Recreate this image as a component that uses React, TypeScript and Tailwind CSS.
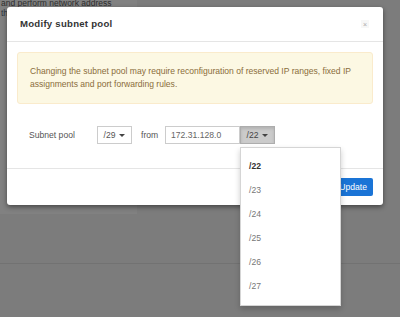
import React from 'react';

const prefixes = ['/22', '/23', '/24', '/25', '/26', '/27'];

function Caret() {
  return <span className="ml-[4px] inline-block w-0 h-0 border-x-[3px] border-x-transparent border-t-[3px] border-t-[#444] align-middle" />;
}

export default function App() {
  return (
    <div className="relative w-[400px] h-[317px] overflow-hidden bg-[#7c7c7c] font-['Liberation_Sans',Arial,sans-serif]">
      {/* page behind the overlay */}
      <div className="flex flex-col h-full">
        <div className="flex h-[214px]">
          <div className="w-[137px] bg-[#818181] text-[8.5px] leading-[10px] text-[#2e2e2e] pl-[1px] -mt-[2px]">
            <div className="whitespace-nowrap">and perform network address</div>
            <div className="text-[#2c3440]">th</div>
          </div>
          <div className="flex-1" />
        </div>
        <div className="h-[49px]" />
        <div className="h-[1px] bg-[#727272]" />
      </div>

      {/* modal */}
      <div className="absolute left-[7px] top-[7px] w-[376px] h-[198px] bg-white rounded-[3px] shadow-[0_2px_5px_rgba(0,0,0,0.45)] flex flex-col">
        <div className="h-[35px] flex items-center justify-between pl-[13px] pr-[14px] border-b border-[#e5e5e5]">
          <span className="text-[9.6px] tracking-[0.25px] font-bold text-[#333]">Modify subnet pool</span>
          <span className="w-[8px] h-[8px] flex items-center justify-center bg-[#f7f7f7] text-[7px] leading-none text-[#aaa]">×</span>
        </div>

        <div className="flex-1 px-[10px] pt-[10px]">
          <div className="rounded-[3px] border border-[#faebcc] bg-[#fcf8e3] px-[12px] py-[12px] text-[8.55px] leading-[13px] text-[#8a6d3b]">
            Changing the subnet pool may require reconfiguration of reserved IP ranges, fixed IP assignments and port forwarding rules.
          </div>

          <div className="mt-[22px] flex items-center text-[8.6px] text-[#555]">
            <span className="w-[80px] pl-[12px]">Subnet pool</span>
            <div className="h-[18px] w-[35px] border border-[#ccc] bg-white flex items-center justify-center">
              /29<Caret />
            </div>
            <span className="ml-[9px] w-[24px]">from</span>
            <div className="h-[18px] w-[75px] border border-[#ccc] flex items-center pl-[5px] text-[#666]">172.31.128.0</div>
            <div className="h-[18px] w-[35px] border border-[#adadad] bg-[#cbcbcb] flex items-center justify-center shadow-[inset_0_2px_3px_rgba(0,0,0,0.12)] text-[#444]">
              /22<Caret />
            </div>
          </div>
        </div>

        <div className="h-[37px] border-t border-[#e5e5e5] flex items-center justify-end px-[10px]">
          <button className="h-[18px] px-[6px] bg-[#1a74d6] text-white text-[8.6px] rounded-[2px]">Update</button>
        </div>
      </div>

      {/* open dropdown menu */}
      <div className="absolute left-[240px] top-[147px] w-[101px] h-[159px] bg-white border border-[#d5d5d5] shadow-[0_3px_6px_rgba(0,0,0,0.2)] pt-[6px]">
        {prefixes.map((p, i) => (
          <div key={p} className={`h-[24px] flex items-center pl-[8px] text-[8.6px] ${i === 0 ? 'font-bold text-[#333]' : 'text-[#777]'}`}>
            {p}
          </div>
        ))}
      </div>
    </div>
  );
}
